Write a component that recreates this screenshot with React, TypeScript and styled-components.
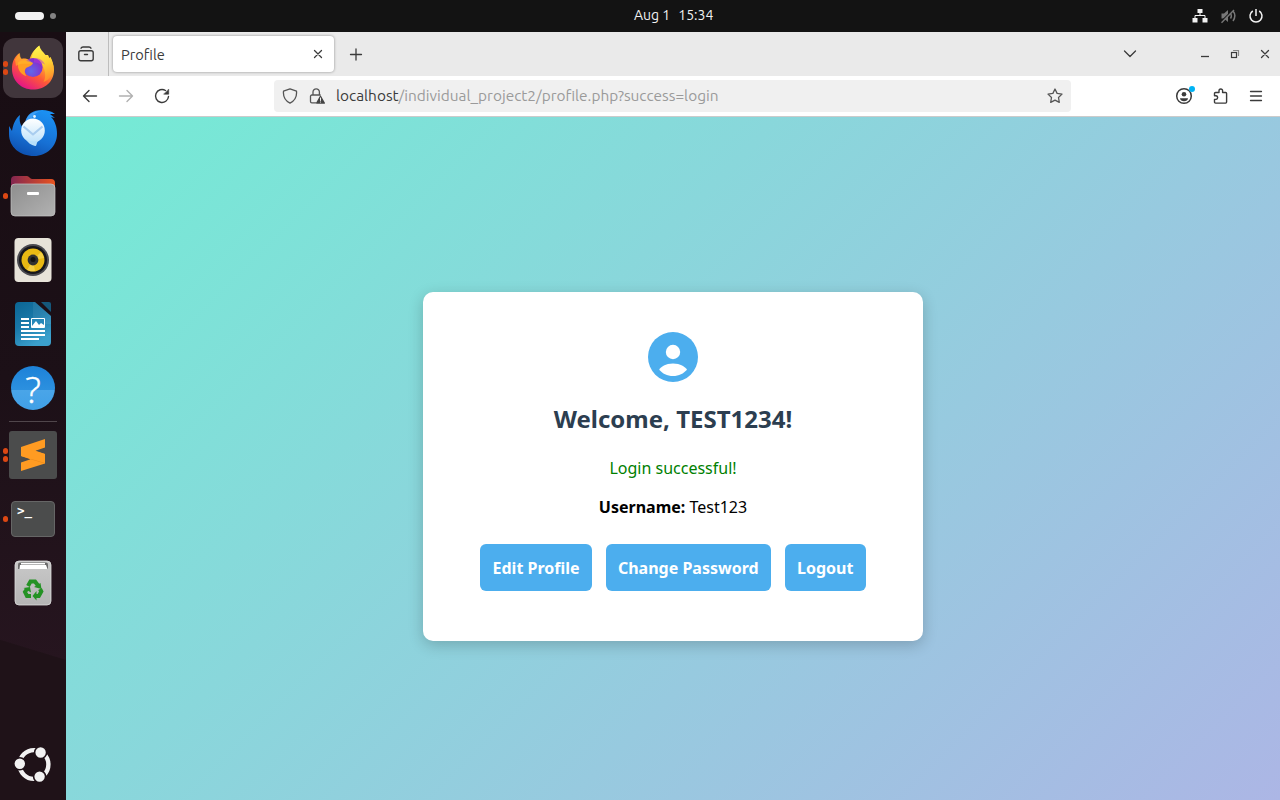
import React from "react";
import styled, { createGlobalStyle, css } from "styled-components";

const GlobalStyle = createGlobalStyle`
  * { box-sizing: border-box; }
  body { margin: 0; overflow: hidden; }
`;

const uiFont = `Ubuntu, "Noto Sans", "Open Sans", sans-serif`;

const Desktop = styled.div`
  display: grid;
  grid-template: 32px 768px / 66px 1fr;
  width: 1280px;
  height: 800px;
  font-family: ${uiFont};
`;

const TopBar = styled.header`
  grid-column: 1 / -1;
  display: grid;
  grid-template-columns: 619px auto 1fr;
  align-items: center;
  padding: 0 16.5px 0 15px;
  background: #131313;
  color: #f2f2f2;
`;

const Workspaces = styled.div`
  display: flex;
  align-items: center;
  gap: 6px;
`;

const WorkspaceDot = styled.span<{ $active?: boolean }>`
  width: ${(p) => (p.$active ? 29 : 6)}px;
  height: ${(p) => (p.$active ? 8 : 6)}px;
  border-radius: 4px;
  background: ${(p) => (p.$active ? "#f2f2f2" : "#838383")};
`;

const Clock = styled.time`
  display: flex;
  gap: 8px;
  font-size: 14px;
  line-height: 30px;
  padding-bottom: 2px;
`;

const Tray = styled.div`
  display: flex;
  justify-content: flex-end;
  gap: 12px;
`;

const Icon = styled.svg<{ $size?: number }>`
  display: block;
  flex: none;
  width: ${(p) => p.$size ?? 16}px;
  height: ${(p) => p.$size ?? 16}px;
`;

const Dock = styled.nav`
  display: flex;
  flex-direction: column;
  padding-top: 4px;
  background:
    linear-gradient(197deg, transparent 600px, #1f1218 601px),
    linear-gradient(#180d13, #1c1017 45%, #26151f 82%);
`;

const DockItem = styled.div<{ $last?: boolean }>`
  position: relative;
  display: flex;
  align-items: center;
  justify-content: center;
  height: 64px;
  ${(p) => p.$last && css`margin: auto 0 4px;`}
`;

const DockTile = styled.div<{ $active?: boolean }>`
  display: flex;
  align-items: center;
  justify-content: center;
  width: 60px;
  height: 60px;
  border-radius: 12px;
  background: ${(p) => (p.$active ? "#41363c" : "transparent")};
`;

const Running = styled.span`
  position: absolute;
  left: 2.800px;
  top: 0;
  bottom: 0;
  display: flex;
  flex-direction: column;
  justify-content: center;
  gap: 2.600px;
`;

const RunDot = styled.i`
  width: 5.600px;
  height: 5.600px;
  border-radius: 50%;
  background: #dd4814;
`;

const DockRule = styled.div`
  width: 48px;
  height: 1px;
  margin: 1px auto;
  background: #50464b;
`;

const Browser = styled.main`
  display: grid;
  grid-template-rows: 44px 41px 1fr;
  min-width: 0;
  color: #3b3b3b;
`;

const TabStrip = styled.div`
  display: flex;
  align-items: center;
  background: #eaeaea;
`;

const ViewButton = styled.div`
  display: flex;
  align-items: center;
  justify-content: center;
  width: 43px;
  height: 44px;
  padding-right: 3px;
  border-right: 1px solid #bdbdbd;
`;

const Tab = styled.div`
  display: flex;
  align-items: center;
  justify-content: space-between;
  width: 221px;
  height: 36px;
  margin: 0 13.500px 0 4px;
  padding: 0 8px;
  border-radius: 4px;
  background: #fff;
  box-shadow: 0 0 3px rgba(0, 0, 0, 0.4);
  font-size: 14.600px;
`;

const WindowButtons = styled.div`
  display: flex;
  align-items: center;
  gap: 14px;
  margin-left: auto;
  padding-right: 7px;
`;

const TabListSlot = styled.span`
  margin-right: 45px;
`;

const NavBar = styled.div`
  display: flex;
  align-items: center;
  background: #fff;
  border-bottom: 1px solid #cbcbcb;
`;

const NavGroup = styled.div<{ $end?: boolean }>`
  display: flex;
  gap: 20px;
  ${(p) => (p.$end ? css`margin-left: auto; padding-right: 16px;` : css`width: 208px; padding-left: 16px;`)}
`;

const AddressBar = styled.div`
  display: flex;
  align-items: center;
  width: 797px;
  height: 32px;
  padding: 0 8px;
  gap: 11px;
  border-radius: 4px;
  background: #f0f0f0;
`;

const Url = styled.span`
  flex: 1;
  font-size: 15.400px;
  line-height: 30px;
  white-space: nowrap;
  color: #9a9a9a;
`;

const Host = styled.span`
  color: #3b3b3b;
`;

const Page = styled.section`
  display: flex;
  align-items: flex-start;
  justify-content: center;
  padding-top: 175px;
  background: linear-gradient(135deg, #74ebd5, #acb6e5);
  font-family: "Noto Sans", sans-serif;
  color: #000;
`;

const Card = styled.article`
  display: flex;
  flex-direction: column;
  align-items: center;
  width: 500px;
  height: 349px;
  padding-top: 40px;
  border-radius: 10px;
  background: #fff;
  box-shadow: 0 4px 15px rgba(0, 0, 0, 0.2);
`;

const Welcome = styled.h2`
  margin: 20px 0 0;
  font-size: 24px;
  line-height: 33px;
  color: #2c3e50;
`;

const Line = styled.p<{ $success?: boolean }>`
  margin: ${(p) => (p.$success ? 22 : 17)}px 0 0;
  font-size: 16px;
  line-height: 22px;
  color: ${(p) => (p.$success ? "green" : "#000")};
`;

const Actions = styled.div`
  display: flex;
  gap: 13.800px;
  margin-top: 26px;
`;

const Action = styled.a`
  height: 47px;
  padding: 1px 12.300px 0;
  border-radius: 6px;
  background: #4caeee;
  color: #fff;
  font-size: 16px;
  font-weight: 700;
  line-height: 47px;
`;

const stroke = {
  fill: "none",
  stroke: "#3b3b3b",
  strokeWidth: 1.3,
  strokeLinecap: "round" as const,
  strokeLinejoin: "round" as const,
};

const Firefox = () => (
  <Icon $size={48} viewBox="0 0 48 48">
    <defs>
      <linearGradient id="ffBody" x1="0.85" y1="0.1" x2="0.3" y2="0.98">
        <stop offset="0" stopColor="#fff44f" />
        <stop offset="0.3" stopColor="#ffb52e" />
        <stop offset="0.62" stopColor="#ff5a36" />
        <stop offset="1" stopColor="#e31587" />
      </linearGradient>
      <linearGradient id="ffTail" x1="0.4" y1="0" x2="0.6" y2="1">
        <stop offset="0" stopColor="#fff44f" />
        <stop offset="0.5" stopColor="#ffd033" />
        <stop offset="1" stopColor="#ff8a2a" />
      </linearGradient>
      <radialGradient id="ffBall" cx="0.4" cy="0.7" r="0.6">
        <stop offset="0" stopColor="#6068ea" />
        <stop offset="1" stopColor="#8430cc" />
      </radialGradient>
    </defs>
    <path fill="url(#ffBody)" d="M3 25C3 18 5 13 10.500 9c0 3 .5 5 2 6 3-1 6 0 8 1C22 9 26 5 30 2c1 5 4 7 7 11l2-1c0 2 1 3 2 4v-3c2 4 4 8 4 13 0 12-9.500 19.500-21 19.500S3 37 3 25Z" />
    <path fill="url(#ffTail)" d="M30.500 1.500c.5 4 3.500 6 6 9.500l2.500 0 1.500 3 1-1c2 4 3.500 8 3 13-1 6-5 10-10 12 3-5 2-14-3-19-3-2-7-3-9-5 1-5 4-10 8-12.500Z" />
    <circle cx="24" cy="23.500" r="9.600" fill="url(#ffBall)" />
    <path fill="#ff9e22" d="M9 18.500c3-2.500 7-2.500 10-1l5 1.500c-1 3-4 3.500-7 5-2 2.500-1.500 5.500.5 8-5-1-9.500-6-8.500-13.500Z" />
    <path fill="#ffb82c" d="M6 15.500 11 9c0 3 .5 5 2 6 3-.5 5.500 0 8 2l3 2c-6 2-12-1-17 3Z" opacity=".6" />
    <path fill="#b833d8" d="M25 14.500c5-1 9 2 11 6-2-1-3-1.500-4-1 1 1 1.500 2 1.500 4-2-4-5-5-8.500-5Z" opacity=".5" />
  </Icon>
);

const Thunderbird = () => (
  <Icon $size={48} viewBox="0 0 48 48">
    <defs>
      <linearGradient id="tbBody" x1="0.7" y1="0" x2="0.3" y2="1">
        <stop offset="0" stopColor="#1b91f3" />
        <stop offset="0.6" stopColor="#1770d4" />
        <stop offset="1" stopColor="#0d4fae" />
      </linearGradient>
      <linearGradient id="tbMail" x1="0" y1="0" x2="0" y2="1">
        <stop offset="0" stopColor="#ffffff" />
        <stop offset="1" stopColor="#bfe3fb" />
      </linearGradient>
    </defs>
    <path fill="url(#tbBody)" d="M16 14.500C18 6 24 2 33 2c5 0 9 1 13 4l-5 0 5 4-4-1c4 4 6 10 6 17 0 12-10 22-23 22C11 48 0 39 0 26V18l3 5c1-6 3-12 8-16-1 5 0 8 1.500 11Z" />
    <path fill="#49a6f8" opacity=".75" d="M17 12c2-6 8-9 15-9-5 1-8 4-10 9Z" />
    <ellipse cx="24" cy="22.500" rx="11.800" ry="12" fill="url(#tbMail)" />
    <path fill="none" stroke="#a9cdef" strokeWidth="2.200" strokeLinejoin="round" d="m14.500 18.500 9.500 8 9.500-8" />
    <path fill="#b7dffa" d="M17 31c4 2.500 8 3 12 2-2 3-1 5-3 5-4-1-7-3-9-7Z" />
    <circle cx="25.500" cy="8.500" r="1.400" fill="#dff3ff" />
  </Icon>
);

const Files = () => (
  <Icon $size={48} viewBox="0 0 48 48">
    <defs>
      <linearGradient id="flBack">
        <stop stopColor="#832650" />
        <stop offset="1" stopColor="#e95420" />
      </linearGradient>
      <linearGradient id="flFront" x1="0" y1="0" x2="1" y2="1">
        <stop stopColor="#8e8e8e" />
        <stop offset="1" stopColor="#b2b2b2" />
      </linearGradient>
    </defs>
    <path fill="url(#flBack)" d="M6 4h12c2 0 3 3 5 3h19a4 4 0 0 1 4 4v10H2V8a4 4 0 0 1 4-4Z" />
    <rect x="2" y="12" width="44" height="32" rx="4" fill="url(#flFront)" stroke="#c6c6c6" strokeWidth=".7" />
    <rect x="18" y="20" width="12" height="3" rx="1" fill="#fff" />
  </Icon>
);

const Rhythmbox = () => (
  <Icon $size={48} viewBox="0 0 48 48">
    <rect x="5.500" y="2" width="37" height="44" rx="4" fill="#e7e3d9" />
    <circle cx="24" cy="24" r="16" fill="#4a4a50" />
    <circle cx="24" cy="24" r="14" fill="#17171c" />
    <circle cx="24" cy="24" r="11.500" fill="#e9b913" />
    <path fill="#f7d759" opacity=".7" d="M24 24 32 16a11.500 11.500 0 0 1 3 6ZM24 24 18 34a11.500 11.500 0 0 0 8 1Z" />
    <circle cx="24" cy="24" r="5.400" fill="#303030" />
    <circle cx="24" cy="23.500" r="2.500" fill="#111" />
  </Icon>
);

const Writer = () => (
  <Icon $size={48} viewBox="0 0 48 48">
    <defs>
      <linearGradient id="wrBody" x1="0" y1="0" x2=".5" y2="1">
        <stop stopColor="#0b6593" />
        <stop offset=".5" stopColor="#1978a8" />
        <stop offset="1" stopColor="#3ba0cc" />
      </linearGradient>
    </defs>
    <path fill="url(#wrBody)" d="M10 2h16l16 14v26a4 4 0 0 1-4 4H10a4 4 0 0 1-4-4V6a4 4 0 0 1 4-4Z" />
    <path fill="#15587b" d="M32 2h8a2 2 0 0 1 2 2v8Z" />
    <path fill="#fff" opacity=".07" d="M24 2h2l16 14v8H24Z" />
    <g fill="#fff">
      <path d="M12 18h8v2h-8zM12 22h8v2h-8zM12 26h8v2h-8zM12 30h24v2H12zM12 34h24v2H12zM12 38h18v2H12z" />
      <rect x="22" y="18" width="14" height="10" rx="1" />
    </g>
    <path fill="#2788b9" d="M23 19h12v6l-3-2-2 2-3-4-4 5Z" />
  </Icon>
);

const HelpMark = styled.span`
  display: flex;
  align-items: center;
  justify-content: center;
  width: 44px;
  height: 44px;
  border-radius: 50%;
  background: linear-gradient(#1d82d8 0, #2c90df 54%, #4aa5e8 55%, #40a0e7 100%);
  color: #fff;
  font: 300 37px/46px "Open Sans", "Noto Sans", sans-serif;
  padding-top: 1px;
  -webkit-text-stroke: 0.5px #fff;
`;

const Sublime = () => (
  <Icon $size={48} viewBox="0 0 48 48">
    <rect width="48" height="48" rx="3" fill="#4b4c4c" />
    <path fill="#ff9b22" d="M12 16 36 8v8.500l-9.500 3.200L36 23v9.500L12 40v-8.500l9.500-3.200L12 25Z" />
    <path fill="#d97b17" opacity=".6" d="m21.500 28.300 9-3.200L36 23v9.500Z" />
    <path fill="#ff9b22" d="m12 16 24 7v9l-24-7Z" />
  </Icon>
);

const TerminalTile = styled.span`
  width: 44px;
  height: 36px;
  padding-left: 5px;
  border: 1px solid #666;
  border-radius: 4px;
  background: #4b4c4c;
  color: #fff;
  font: bold 12.500px/17px "DejaVu Sans Mono", monospace;
`;

const Trash = () => (
  <Icon $size={48} viewBox="0 0 48 48">
    <defs>
      <linearGradient id="trBody" x1="0" y1="0" x2="0" y2="1">
        <stop stopColor="#c9c9c9" />
        <stop offset="1" stopColor="#b5b5b5" />
      </linearGradient>
    </defs>
    <rect x="6" y="2" width="36" height="44" rx="4" fill="url(#trBody)" stroke="#dedede" strokeWidth=".8" />
    <path fill="#6a6a6a" d="M11 3.500h26a2 2 0 0 1 2 2V10H9V5.500a2 2 0 0 1 2-2Z" />
    <path fill="#fff" d="M12 4h24v1.500H12ZM11 6h26l1.500 4h-28Z" />
    <g fill="none" stroke="#249224" strokeWidth="4">
      <path d="m19 27 2.500-4.500H26l3 4M31 30l1.300 2.500-2.500 4.500h-3M22 37h-4l-2-4 2-3" />
    </g>
    <path fill="#249224" d="m25 28 6.500-4 1 6ZM27.500 32v9.500l-4-4.500ZM14.500 29l6.500-1 1 5.500Z" />
  </Icon>
);

const UbuntuLogo = () => (
  <Icon $size={48} viewBox="0 0 48 48">
    <circle cx="25" cy="24.500" r="14.400" fill="none" stroke="#f2f2f2" strokeWidth="4.400" />
    <g fill="#f2f2f2" stroke="#1f1218" strokeWidth="1.600">
      <circle cx="10.800" cy="23.800" r="6" />
      <circle cx="31.600" cy="12.500" r="6" />
      <circle cx="30.600" cy="36.600" r="6" />
    </g>
  </Icon>
);

const dockApps: { icon: React.ReactNode; dots?: number; active?: boolean; ruled?: boolean }[] = [
  { icon: <Firefox />, dots: 2, active: true },
  { icon: <Thunderbird /> },
  { icon: <Files />, dots: 1 },
  { icon: <Rhythmbox /> },
  { icon: <Writer /> },
  { icon: <HelpMark>?</HelpMark>, ruled: true },
  { icon: <Sublime />, dots: 2 },
  { icon: <TerminalTile>&gt;_</TerminalTile>, dots: 1 },
  { icon: <Trash /> },
];

export default function App() {
  return (
    <>
      <GlobalStyle />
      <Desktop>
        <TopBar>
          <Workspaces>
            <WorkspaceDot $active />
            <WorkspaceDot />
          </Workspaces>
          <Clock>
            <span>Aug 1</span>
            <span>15:34</span>
          </Clock>
          <Tray>
            <Icon viewBox="0 0 16 16" fill="#f2f2f2">
              <path d="M5.500 1h5v4h-5zM.5 10h5v4.500h-5zM10.500 10h5v4.500h-5z" />
              <path d="M8 5v2.500M3 10V7.500h10V10" fill="none" stroke="#f2f2f2" />
            </Icon>
            <Icon viewBox="0 0 16 16" fill="#777">
              <path d="M1.500 5.500H4L8 2v12l-4-3.500H1.500Z" />
              <path d="M10.500 5.500c1 1.500 1 3.500 0 5M13 3c2.500 3 2 7 0 10" fill="none" stroke="#777" strokeWidth="1.500" />
              <path d="M1 13.700 13 1.700" stroke="#131313" strokeWidth="1.200" />
              <path d="M1.500 14.700 14 2" stroke="#777" strokeWidth="1.400" />
            </Icon>
            <Icon viewBox="0 0 16 16" fill="none" stroke="#f2f2f2" strokeWidth="1.500">
              <path d="M4.800 3a6 6 0 1 0 6.400 0M8 1v7" />
            </Icon>
          </Tray>
        </TopBar>

        <Dock>
          {dockApps.map((app, i) => (
            <React.Fragment key={i}>
              <DockItem>
                {app.dots && (
                  <Running>
                    {Array.from({ length: app.dots }, (_, n) => (
                      <RunDot key={n} />
                    ))}
                  </Running>
                )}
                <DockTile $active={app.active}>{app.icon}</DockTile>
              </DockItem>
              {app.ruled && <DockRule />}
            </React.Fragment>
          ))}
          <DockItem $last>
            <UbuntuLogo />
          </DockItem>
        </Dock>

        <Browser>
          <TabStrip>
            <ViewButton>
              <Icon viewBox="0 0 16 16" {...stroke} strokeWidth={1.4}>
                <rect x=".8" y="4.800" width="14.400" height="10" rx="2" />
                <path d="M3 2.200Q3.500 1 5 1h6q1.500 0 2 1.200M6.500 8.500h3" />
              </Icon>
            </ViewButton>
            <Tab>
              <span>Profile</span>
              <Icon viewBox="0 0 16 16" {...stroke}>
                <path d="m4.500 4.500 7 7m0-7-7 7" />
              </Icon>
            </Tab>
            <Icon viewBox="0 0 16 16" {...stroke}>
              <path d="M8 3v11M2.500 8.500h11" />
            </Icon>
            <WindowButtons>
              <TabListSlot>
                <Icon viewBox="0 0 16 16" {...stroke}>
                  <path d="m2.500 5 5.500 5.500L13.500 5" />
                </Icon>
              </TabListSlot>
              <Icon viewBox="0 0 16 16" {...stroke} strokeLinecap="butt">
                <path d="M4 10.500h8" />
              </Icon>
              <Icon viewBox="0 0 16 16" {...stroke} strokeWidth={1.2} strokeLinejoin="miter">
                <path d="M6.500 4.500h5v5" stroke="#888" />
                <rect x="4.500" y="6.500" width="5" height="5" />
              </Icon>
              <Icon viewBox="0 0 16 16" {...stroke}>
                <path d="m4.500 4.500 7 7m0-7-7 7" />
              </Icon>
            </WindowButtons>
          </TabStrip>

          <NavBar>
            <NavGroup>
              <Icon viewBox="0 0 16 16" {...stroke} strokeWidth={1.4}>
                <path d="M14.500 8H1.500m5.500-5.500L1.500 8 7 13.500" />
              </Icon>
              <Icon viewBox="0 0 16 16" {...stroke} stroke="#b1b1b1" strokeWidth={1.4}>
                <path d="M1.500 8h13M9 2.500 14.500 8 9 13.500" />
              </Icon>
              <Icon viewBox="0 0 16 16" {...stroke} strokeWidth={1.4}>
                <path d="M14.500 8.500A6.500 6.500 0 1 1 11.500 2.500" />
                <path d="M14.700 1.500v4.700H10Z" fill="#3b3b3b" strokeWidth=".6" />
              </Icon>
            </NavGroup>
            <AddressBar>
              <Icon viewBox="0 0 16 16" {...stroke} stroke="#555">
                <path d="m8 .8 6.500 2.400c.5 5-1.500 9.500-6.500 12C3 12.700 1 8.200 1.500 3.200Z" />
              </Icon>
              <Icon viewBox="0 0 16 16" {...stroke} stroke="#555">
                <path d="M4 7V4a3.200 3.200 0 0 1 6.400 0v3M7 14.800H2.800a1.300 1.300 0 0 1-1.300-1.300V8.300A1.300 1.300 0 0 1 2.800 7h8.400" />
                <path d="m11.500 8.300 3.800 6.800H7.700Z" fill="#444" stroke="#444" />
                <path d="M11.500 10v2.500m0 1.500v.1" stroke="#f0f0f0" strokeWidth="1" />
              </Icon>
              <Url>
                <Host>localhost</Host>/individual_project2/profile.php?success=login
              </Url>
              <Icon viewBox="0 0 16 16" {...stroke} stroke="#555">
                <path d="m8 1 2.100 4.400 4.900.7-3.500 3.400.8 4.900L8 12.100l-4.300 2.300.8-4.900L1 6.100l4.900-.7Z" />
              </Icon>
            </AddressBar>
            <NavGroup $end>
              <Icon viewBox="0 0 16 16" {...stroke} overflow="visible">
                <circle cx="8" cy="8" r="7.300" strokeWidth="1.500" />
                <circle cx="8" cy="6.200" r="2.300" fill="#3b3b3b" stroke="none" />
                <path d="M4 10.200h8c0 2-2 3-4 3s-4-1-4-3Z" fill="#3b3b3b" stroke="none" />
                <circle cx="16" cy="1" r="3" fill="#00b3f4" stroke="none" />
              </Icon>
              <Icon viewBox="0 0 16 16" {...stroke} strokeWidth={1.4}>
                <path d="M3.500 4.500H7V2.800a1.800 1.800 0 0 1 3.600 0v1.700h3a1 1 0 0 1 1 1v8.600a1 1 0 0 1-1 1H3.500a1 1 0 0 1-1-1v-2.700h1.700a1.900 1.900 0 0 0 0-3.700H2.500V5.500a1 1 0 0 1 1-1Z" />
              </Icon>
              <Icon viewBox="0 0 16 16" {...stroke}>
                <path d="M2.500 3.500h11M2.500 8h11M2.500 12.500h11" />
              </Icon>
            </NavGroup>
          </NavBar>

          <Page>
            <Card>
              <Icon $size={50} viewBox="0 0 50 50">
                <circle cx="25" cy="25" r="25" fill="#4caeee" />
                <circle cx="25" cy="20" r="7.200" fill="#fff" />
                <path fill="#fff" d="M11.200 37.700C13 34.500 17.500 31.400 25 31.400s12 3.100 14 6.300C35.500 41.500 31 44 25 44s-10.500-2.500-13.800-6.300Z" />
              </Icon>
              <Welcome>Welcome, TEST1234!</Welcome>
              <Line $success>Login successful!</Line>
              <Line>
                <b>Username:</b> Test123
              </Line>
              <Actions>
                <Action>Edit Profile</Action>
                <Action>Change Password</Action>
                <Action>Logout</Action>
              </Actions>
            </Card>
          </Page>
        </Browser>
      </Desktop>
    </>
  );
}
